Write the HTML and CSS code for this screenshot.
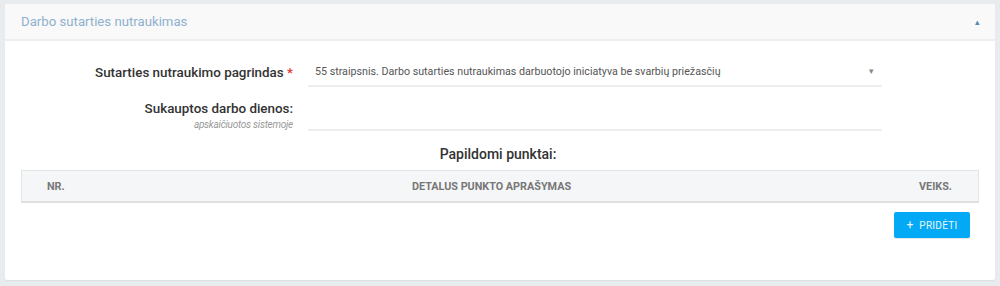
FILE: index.html
```html
<!DOCTYPE html>
<html lang="lt">
<head>
    <meta charset="UTF-8">
    <title>Darbo sutarties nutraukimas</title>
    <link rel="stylesheet" href="styles.css">
</head>
<body>
<div class="panel">
    <div class="panel-heading">
        <h3 class="panel-title">Darbo sutarties nutraukimas</h3>
        <span class="collapse-caret">&#9652;</span>
    </div>
    <div class="panel-body">
        <div class="form-row">
            <label class="form-label">Sutarties nutraukimo pagrindas <span class="required">*</span></label>
            <div class="select-field">
                <span>55 straipsnis. Darbo sutarties nutraukimas darbuotojo iniciatyva be svarbių priežasčių</span>
                <span class="select-caret">&#9662;</span>
            </div>
        </div>
        <div class="form-row">
            <label class="form-label">
                Sukauptos darbo dienos:
                <small class="form-hint">apskaičiuotos sistemoje</small>
            </label>
            <div class="input-field"></div>
        </div>

        <h4 class="section-title">Papildomi punktai:</h4>
        <table class="items-table">
            <thead>
                <tr>
                    <th class="col-nr">Nr.</th>
                    <th class="col-desc">Detalus punkto aprašymas</th>
                    <th class="col-act">Veiks.</th>
                </tr>
            </thead>
        </table>
        <div class="table-actions">
            <button class="btn-add"><span class="plus">+</span> Pridėti</button>
        </div>
    </div>
</div>
</body>
</html>
```

FILE: styles.css
```css
body {
    margin: 0;
    padding: 4px 5px 5px 5px;
    background-color: #e9ecef;
    font-family: Roboto, "Liberation Sans", Arial, sans-serif;
    color: #333;
}

.panel {
    background-color: #fff;
    border-radius: 2px;
    box-shadow: 0 1px 1px rgba(0, 0, 0, 0.05);
    height: 276px;
    box-sizing: border-box;
}

.panel-heading {
    display: flex;
    align-items: center;
    justify-content: space-between;
    height: 35px;
    padding: 0 16px;
    background-color: #f9f9f9;
    border-bottom: 2px solid #eceef0;
}

.panel-title {
    margin: 0;
    font-size: 13.2px;
    font-weight: 400;
    color: #8fb1cd;
}

.collapse-caret {
    font-size: 9px;
    color: #5a88b0;
    margin-right: -1px;
}

.panel-body {
    padding: 16px 16px 0 16px;
}

.form-row {
    display: grid;
    grid-template-columns: 272px 574px;
    column-gap: 15px;
    align-items: end;
    margin-bottom: 13px;
}

.form-label {
    text-align: right;
    font-size: 13.4px;
    font-weight: 500;
    color: #333;
    line-height: 18px;
    padding-bottom: 5px;
}

.required {
    color: #e53935;
}

.form-hint {
    display: block;
    font-size: 10px;
    letter-spacing: -0.25px;
    font-style: italic;
    font-weight: 400;
    color: #999;
    line-height: 14px;
}

.select-field {
    display: flex;
    align-items: center;
    justify-content: space-between;
    height: 28px;
    padding: 0 8px 0 7px;
    border-bottom: 2px solid #eeeeee;
    font-size: 10.7px;
    color: #555;
}

.select-caret {
    font-size: 9px;
    color: #888;
}

.input-field {
    height: 26px;
    margin-bottom: 2px;
    border-bottom: 2px solid #eeeeee;
}

.form-row:nth-child(2) {
    margin-bottom: 13px;
}

.form-row:nth-child(2) .form-label {
    padding-bottom: 1px;
}

.section-title {
    margin: 0 0 8px 0;
    padding-right: 4px;
    text-align: center;
    font-size: 14px;
    font-weight: 500;
    color: #333;
}

.items-table {
    width: 958px;
    border-collapse: collapse;
    background-color: #f5f6f8;
    border: 1px solid #e3e4e6;
    border-bottom: 2px solid #dfe0e2;
}

.items-table th {
    height: 30px;
    padding: 0;
    font-size: 10.8px;
    font-weight: 700;
    text-transform: uppercase;
    color: #777;
}

.col-nr {
    text-align: left;
    padding-left: 25px !important;
    width: 80px;
}

.col-desc {
    text-align: center;
}

.col-act {
    text-align: right;
    padding-right: 26px !important;
    width: 96px;
}

.table-actions {
    display: flex;
    justify-content: flex-end;
    padding-right: 9px;
    margin-top: 9px;
}

.btn-add {
    width: 76px;
    height: 26px;
    border: none;
    border-radius: 2px;
    background-color: #03a9f4;
    color: #e8f6fe;
    font-family: Roboto, "Liberation Sans", Arial, sans-serif;
    font-size: 10px;
    text-transform: uppercase;
    letter-spacing: 0.3px;
    box-shadow: 0 1px 1px rgba(0, 0, 0, 0.1);
    cursor: pointer;
}

.plus {
    font-size: 12px;
    margin-right: 3px;
}
```
